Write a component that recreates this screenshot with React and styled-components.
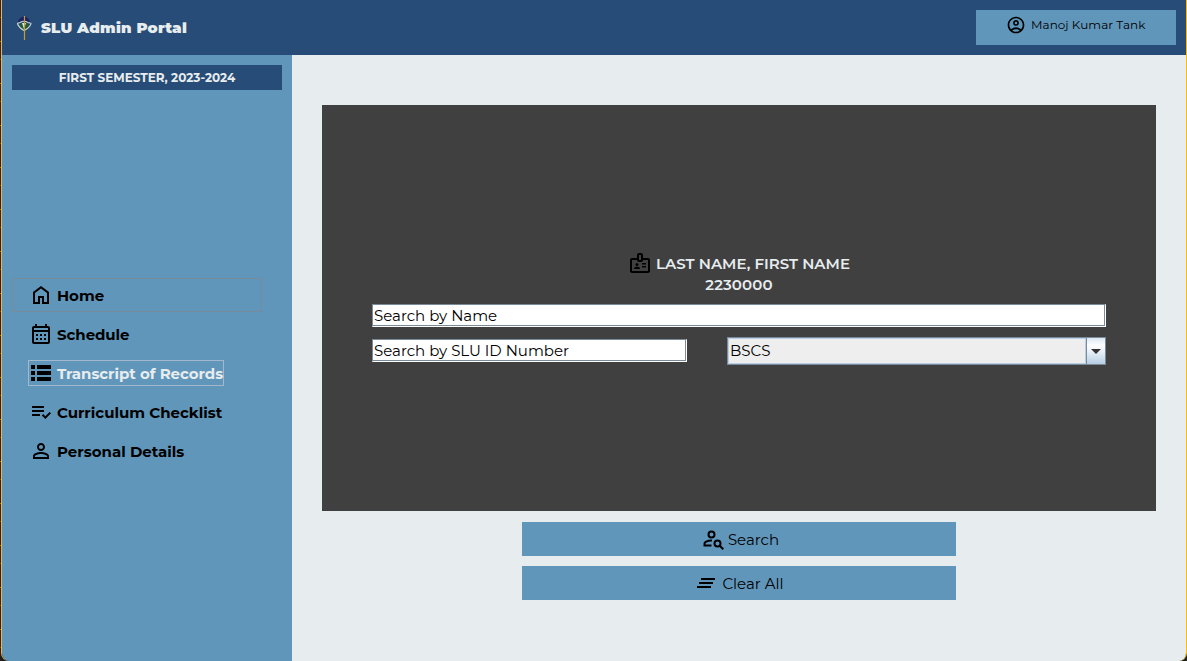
import React from "react";
import styled, { createGlobalStyle } from "styled-components";
import {
  MdOutlineAccountCircle,
  MdOutlineCalendarMonth,
  MdPersonOutline,
  MdOutlineBadge,
  MdClearAll,
} from "react-icons/md";

const c = { navy: "#274c77", blue: "#6096ba", pale: "#e7ecef", dark: "#404040" };

const Global = createGlobalStyle`
  * { box-sizing: border-box; }
  body { margin: 0; overflow: hidden; background: #1f1f1f; }
  svg { flex: none; display: block; }
`;

const Desktop = styled.div`
  width: 1187px;
  height: 661px;
  padding-left: 1px;
  font-family: Montserrat, Inter, "Open Sans", sans-serif;
  background: repeating-linear-gradient(#242424 0 17px, #5a5048 17px 18px, #1f1f1f 18px 41px, #777 41px 42px);
`;
const Window = styled.div`
  height: 661px;
  display: flex;
  flex-direction: column;
  border: solid #ffb900;
  border-width: 0 1px;
  border-radius: 0 0 8px 8px;
  overflow: hidden;
`;
const Header = styled.header`
  height: 55px;
  flex: none;
  display: flex;
  align-items: center;
  justify-content: space-between;
  padding: 0 10px 0 12px;
  background: ${c.navy};
`;
const Brand = styled.div`
  display: flex;
  align-items: center;
  gap: 7px;
`;
const Label = styled.span`
  font-size: ${(p) => p.$size || 15}px;
  font-weight: ${(p) => p.$weight || 400};
  letter-spacing: ${(p) => p.$track || 0}px;
  color: ${(p) => p.$color || "#000"};
  padding-top: ${(p) => p.$drop || 0}px;
  line-height: 20px;
  white-space: nowrap;
`;
const UserButton = styled.button`
  width: 200px;
  height: 35px;
  border: 0;
  padding: 0 0 5px 30px;
  display: flex;
  align-items: center;
  gap: 5px;
  background: ${c.blue};
  font-family: inherit;
`;
const Body = styled.div`
  flex: 1;
  display: flex;
`;
const Sidebar = styled.aside`
  width: 290px;
  padding: 10px;
  background: ${c.blue};
`;
const Term = styled.div`
  height: 25px;
  display: flex;
  align-items: center;
  justify-content: center;
  background: ${c.navy};
`;
const Menu = styled.nav`
  margin-top: 188px;
  display: flex;
  flex-direction: column;
  gap: 5px;
`;
const MenuItem = styled.a`
  width: 250px;
  height: 34px;
  display: flex;
  align-items: center;
  padding-left: 15px;
  border: 1px solid ${(p) => (p.$outlined ? "#768c9c" : "transparent")};
`;
const MenuFocus = styled.span`
  height: 26px;
  display: flex;
  align-items: center;
  gap: 4px;
  border: 1px solid ${(p) => (p.$focused ? "#a3b8cc" : "transparent")};
`;
const Main = styled.main`
  flex: 1;
  display: flex;
  flex-direction: column;
  align-items: center;
  padding: 50px 30px 0;
  background: ${c.pale};
`;
const Panel = styled.section`
  width: 834px;
  height: 406px;
  padding: 146px 50px 0;
  margin-bottom: 11px;
  background: ${c.dark};
`;
const Student = styled.div`
  height: 24px;
  display: flex;
  align-items: center;
  justify-content: center;
  gap: 4px;
`;
const StudentId = styled.div`
  height: 20px;
  display: flex;
  justify-content: center;
  margin-bottom: 9px;
`;
const Field = styled.div`
  width: ${(p) => p.$width}px;
  height: 23px;
  display: flex;
  align-items: center;
  padding-left: 1px;
  background: #fff;
  border: 1px solid #7a8a99;
  border-right-color: #fff;
  border-bottom-color: #fff;
  box-shadow: inset -1px -1px #7a8a99;
`;
const FieldRow = styled.div`
  height: 28px;
  margin-top: 10px;
  display: flex;
  align-items: center;
  justify-content: space-between;

  > ${Field} {
    margin-bottom: 1px;
  }
`;
const Combo = styled.div`
  width: 379px;
  height: 28px;
  display: flex;
  border: 1px solid #7a8a99;
`;
const ComboValue = styled.div`
  flex: 1;
  display: flex;
  align-items: center;
  padding-left: 1px;
  background: #eee;
  border: 1px solid #b8cfe5;
`;
const ComboArrow = styled.div`
  width: 19px;
  display: flex;
  align-items: center;
  justify-content: center;
  border-left: 1px solid #7a8a99;
  background: linear-gradient(#dde8f3, #fff 30%, #b8cfe5);
`;
const Action = styled.button`
  width: 434px;
  height: 34px;
  margin-bottom: 10px;
  padding: 0 0 0 ${(p) => p.$indent || 0}px;
  border: 0;
  display: flex;
  align-items: center;
  justify-content: center;
  gap: ${(p) => p.$gap || 4}px;
  background: ${c.blue};
  font-family: inherit;
`;

const Logo = () => (
  <svg width="20" height="26" viewBox="0 0 20 26">
    <path d="M4 7Q5 2 10 1.500Q15 2 16 7Z" fill="#1d2465" />
    <path d="M5 9Q10 5 15 9L14 14L10 17L6 14Z" fill="#205b3c" />
    <path d="M3 8.500L6 7.500Q10 5 14 7.500L17.500 8.500M3.500 9Q5.500 13.500 10 15.500Q15 13.500 17 9" fill="none" stroke="#cdd3dc" strokeWidth="1.100" />
    <path d="M8 8L10 14L12 8Z" fill="#e7ecef" />
    <path d="M10.500 1V25" stroke="#c99b32" strokeWidth="1.200" />
  </svg>
);
const Glyph = ({ d }) => (
  <svg width="24" height="24" viewBox="0 0 24 24"><path d={d} /></svg>
);
const Home = () => <Glyph d="M6 19h3v-6h6v6h3v-9l-6-4.500L6 10v9Zm-2 2V9l8-6 8 6v12h-7v-6h-2v6H4Z" />;
const List = () => <Glyph d="M2 4h4v4H2ZM8 4h14v4H8ZM2 10h4v4H2ZM8 10h14v4H8ZM2 16h4v4H2ZM8 16h14v4H8Z" />;
const Check = () => <Glyph d="M3 6h12v2H3ZM3 10h12v2H3ZM3 14h8v2H3ZM16.350 19l-3.550-3.550 1.400-1.400 2.130 2.120 4.250-4.250L22 13.350Z" />;
const PersonSearch = () => (
  <svg width="24" height="24" viewBox="0 0 24 24" fill="none" stroke="#000" strokeWidth="2">
    <circle cx="10.500" cy="7.500" r="3" />
    <path d="M10.500 18.500H3.500v-1.800Q3.500 15.500 4.700 14.900Q7.500 13.500 11 13.600" />
    <circle cx="16.500" cy="16.500" r="3" />
    <path d="m18.700 18.700 3.600 3.600" />
  </svg>
);

const items = [
  { text: "Home", Icon: Home, outlined: true },
  { text: "Schedule", Icon: () => <MdOutlineCalendarMonth size={24} />, track: -0.06 },
  { text: "Transcript of Records", Icon: List, focused: true, track: -0.05 },
  { text: "Curriculum Checklist", Icon: Check },
  { text: "Personal Details", Icon: () => <MdPersonOutline size={24} /> },
];

export default function App() {
  return (
    <Desktop>
      <Global />
      <Window>
        <Header>
          <Brand>
            <Logo />
            <Label $weight={900} $track={0.2} $color={c.pale}>SLU Admin Portal</Label>
          </Brand>
          <UserButton>
            <MdOutlineAccountCircle size={20} />
            <Label $size={12} $track={0.05}>Manoj Kumar Tank</Label>
          </UserButton>
        </Header>
        <Body>
          <Sidebar>
            <Term><Label $size={12} $weight={700} $color={c.pale}>FIRST SEMESTER, 2023-2024</Label></Term>
            <Menu>
              {items.map(({ text, Icon, outlined, focused, track }) => (
                <MenuItem key={text} $outlined={outlined}>
                  <MenuFocus $focused={focused}>
                    <Icon />
                    <Label $weight={700} $track={track} $drop={2} $color={focused && c.pale}>{text}</Label>
                  </MenuFocus>
                </MenuItem>
              ))}
            </Menu>
          </Sidebar>
          <Main>
            <Panel>
              <Student>
                <MdOutlineBadge size={24} />
                <Label $weight={600} $drop={2} $color={c.pale}>LAST NAME, FIRST NAME</Label>
              </Student>
              <StudentId><Label $weight={600} $track={0.1} $color={c.pale}>2230000</Label></StudentId>
              <Field $width={734}><Label>Search by Name</Label></Field>
              <FieldRow>
                <Field $width={315}><Label>Search by SLU ID Number</Label></Field>
                <Combo>
                  <ComboValue><Label>BSCS</Label></ComboValue>
                  <ComboArrow>
                    <svg width="10" height="5" viewBox="0 0 10 5"><path d="M0 0h10L5 5Z" fill="#333" /></svg>
                  </ComboArrow>
                </Combo>
              </FieldRow>
            </Panel>
            <Action $gap={3} $indent={2}><PersonSearch /><Label $drop={2}>Search</Label></Action>
            <Action><MdClearAll size={24} /><Label $drop={2}>Clear All</Label></Action>
          </Main>
        </Body>
      </Window>
    </Desktop>
  );
}
